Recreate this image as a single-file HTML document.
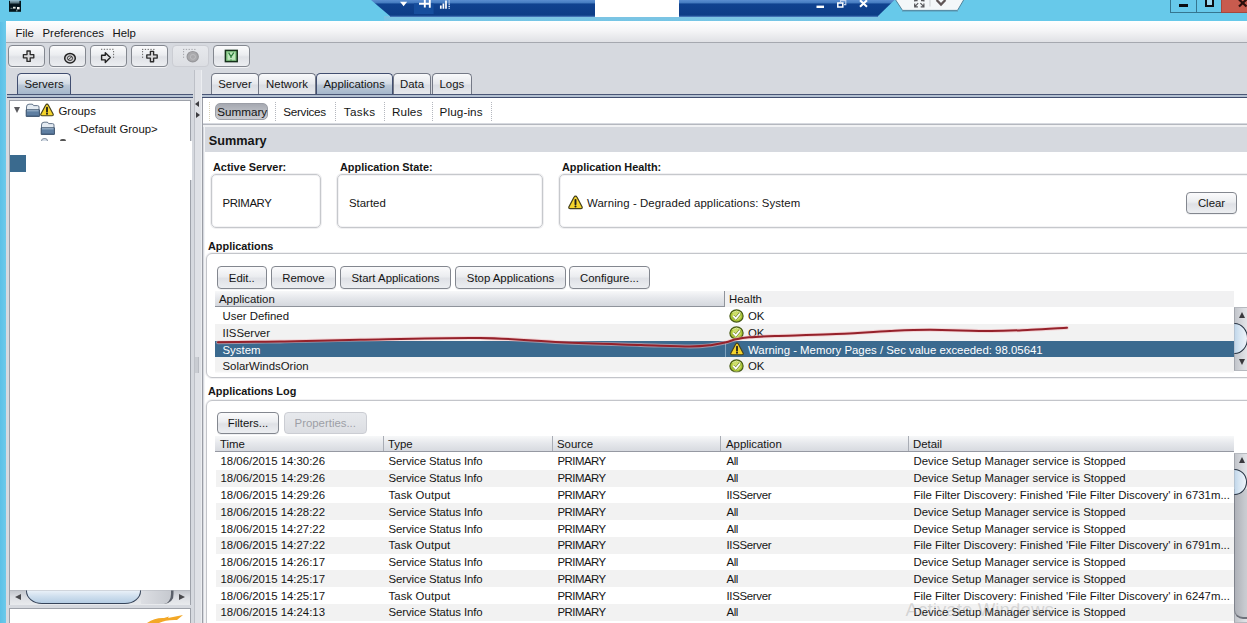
<!DOCTYPE html>
<html><head><meta charset="utf-8"><title>Management Client</title>
<style>
*{box-sizing:border-box;margin:0;padding:0}
html,body{width:1247px;height:623px;overflow:hidden}
body{position:relative;background:#d6d9df;font-family:"Liberation Sans",Arial,sans-serif;font-size:11.4px;color:#151515;}
.a{position:absolute}
.t{position:absolute;white-space:nowrap;line-height:14px;height:14px}
.b{font-weight:bold;font-size:10.9px}
.btn{position:absolute;border:1px solid #83878f;border-radius:4px;background:linear-gradient(#fbfbfc,#ebedf0 45%,#dfe1e6 55%,#eceef1);box-shadow:0 1px 0 #f1f2f4;text-align:center;white-space:nowrap;font-size:11.4px}
.btn.dis{border-color:#cbcdd3;color:#9d9fa6;background:linear-gradient(#e7e9ed,#dcdee3);box-shadow:none}
.tab{position:absolute;top:73px;height:21px;border:1.2px solid #747986;border-bottom:none;border-radius:4.5px 4.5px 0 0;background:linear-gradient(#f9fafb,#e6e8ec 50%,#dadde3 55%,#e6e8ec);text-align:center;line-height:21px;font-size:11.4px;white-space:nowrap}
.tab.sel{border-color:#414e70;border-width:1.4px;height:22px;background:linear-gradient(#f1f3f6,#d3dbe5 45%,#bac7d6 55%,#a3b5ca);}
.hdr{position:absolute;background:linear-gradient(#f7f8f9,#e6e8ec 45%,#d5d8de);border-bottom:1px solid #a6aab2}
.row{position:absolute;height:17px}
.alt{background:#f2f2f2}
.sep{position:absolute;width:1px;background:#a9adb5}
</style></head><body>

<div class="a" style="left:0;top:0;width:1247px;height:22px;background:#67c9ea"></div>
<div class="a" style="left:0;top:22px;width:6px;height:601px;background:linear-gradient(90deg,#5cc0e6,#6ccaeb)"></div>
<svg class="a" style="left:8px;top:0" width="14" height="13" viewBox="8 0 14 13"><defs><linearGradient id="ig" x1="0" y1="0" x2="0" y2="1"><stop offset="0" stop-color="#9cc6d6"/><stop offset="0.6" stop-color="#5f7f88"/><stop offset="1" stop-color="#0c2026"/></linearGradient></defs><rect x="9" y="0.8" width="12" height="11" fill="#03151b"/><rect x="10" y="0" width="9.4" height="4.2" fill="url(#ig)"/><path d="M10.5 8.3 H12.5" stroke="#8fa3a0" stroke-width="0.8"/><rect x="13" y="6.8" width="2.6" height="1.8" fill="#dfe8e0"/><rect x="17" y="7" width="2.6" height="2.4" fill="#f4f8f2"/><rect x="16.2" y="9.6" width="1.2" height="1.8" fill="#7f9a98"/></svg>
<div class="a" style="left:384px;top:16px;width:496px;height:5.5px;background:linear-gradient(#80c3e2,#72c6e7)"></div>
<svg class="a" style="left:360px;top:0" width="560" height="19" viewBox="360 0 560 19"><defs><linearGradient id="cb" x1="0" y1="0" x2="0" y2="1"><stop offset="0" stop-color="#5b8ed0"/><stop offset="0.17" stop-color="#457bc0"/><stop offset="0.24" stop-color="#10428f"/><stop offset="1" stop-color="#0c3b85"/></linearGradient></defs><path d="M371 0 L894.5 0 L877.5 16.6 L390.5 16.6 Z" fill="url(#cb)"/><path d="M390 16.3 L878 16.3" stroke="#3f70b3" stroke-width="1.2"/><rect x="414" y="3.4" width="19.6" height="10.6" fill="#164e9d"/><path d="M400 1.8 L407.2 1.8 L403.6 6.2 Z" fill="#fff"/><path d="M419 3.7 H430 M424.8 0 V7.6 M429.8 0 V7.8" stroke="#fff" stroke-width="1.9" fill="none"/><path d="M440.8 8.8 V5.6 M443.4 8.8 V3.4 M446 8.8 V0.6" stroke="#fff" stroke-width="1.7"/><path d="M449.2 8.8 V0" stroke="#d4e0f2" stroke-width="1.5" stroke-dasharray="1 0.8"/><rect x="816.5" y="5.6" width="7.5" height="2.4" fill="#fff"/><rect x="837.8" y="3" width="5" height="4" fill="none" stroke="#fff" stroke-width="1.5"/><path d="M840.5 2.2 V0.6 H845.8 V4.6 H844" fill="none" stroke="#c3d3ec" stroke-width="1.1"/><path d="M860 0.3 L867 6.8 M867 0.3 L860 6.8" stroke="#fff" stroke-width="2.1"/></svg>
<div class="a" style="left:595px;top:0;width:84px;height:17px;background:#fff"></div>
<svg class="a" style="left:890px;top:0" width="80" height="13" viewBox="890 0 80 13"><path d="M895 -1 L902.5 10.4 L957.5 10.4 L964.2 -1 Z" fill="#f3f7f9" stroke="#4f8199" stroke-width="1"/><path d="M902 11.2 H958" stroke="#5a9ab8" stroke-width="0.8"/><path d="M918.2 3.2 L915 6.4 M914.7 3.6 V6.8 H917.9 M920.4 3.2 L923.6 6.4 M923.9 3.6 V6.8 H920.7 M914.7 1.6 V0 M923.9 1.6 V0 M915 0.6 H917.6 M921 0.6 H923.6" stroke="#56565a" stroke-width="1.2" fill="none"/><path d="M930 0 V6.5" stroke="#b9bcc0" stroke-width="0.7"/><path d="M936.6 0 L941 4.6 L945.4 0" fill="none" stroke="#5f5556" stroke-width="2.3"/></svg>
<div class="a" style="left:1170.3px;top:-1px;width:27px;height:13.6px;border:1.2px solid #35768f;background:#67c9ea"></div>
<div class="a" style="left:1196px;top:-1px;width:26px;height:13.6px;border:1.2px solid #35768f;background:#67c9ea"></div>
<div class="a" style="left:1220.8px;top:-1px;width:28px;height:13.6px;border:1px solid #a5483d;background:#c85b4e"></div>
<div class="a" style="left:1178.8px;top:4.2px;width:9.4px;height:2.9px;background:#0c0c10"></div>
<div class="a" style="left:1205px;top:-2px;width:9px;height:9.2px;border:2px solid #0c0c10;background:#9fd9ef"></div>
<svg class="a" style="left:1236px;top:0" width="11" height="9" viewBox="0 0 11 9"><path d="M3 -0.5 L10.5 6.5 M10.5 -0.5 L3 6.5" stroke="#2a0e0c" stroke-width="2.3"/></svg>
<div class="a" style="left:6px;top:21.4px;width:1241px;height:21.6px;background:linear-gradient(#ffffff,#f5f5f7 45%,#e0e1e5);border-bottom:1px solid #a5a8af"></div>
<div class="t" style="left:15.5px;top:26px">File</div>
<div class="t" style="left:42.5px;top:26px">Preferences</div>
<div class="t" style="left:112.5px;top:26px">Help</div>
<div class="btn" style="left:8.3px;top:45px;width:37px;height:22px"></div>
<div class="btn" style="left:49.3px;top:45px;width:37px;height:22px"></div>
<div class="btn" style="left:90.3px;top:45px;width:37px;height:22px"></div>
<div class="btn" style="left:131.3px;top:45px;width:37px;height:22px"></div>
<div class="btn dis" style="left:172.3px;top:45px;width:37px;height:22px"></div>
<div class="btn" style="left:213.3px;top:45px;width:37px;height:22px"></div>
<svg class="a" style="left:0;top:0" width="260" height="70" viewBox="0 0 260 70"><path d="M27.0 51.0 H30.200000000000003 V54.6 H33.800000000000004 V57.800000000000004 H30.200000000000003 V61.400000000000006 H27.0 V57.800000000000004 H23.400000000000002 V54.6 H27.0 Z" fill="#d9d9db" stroke="#2b2b2b" stroke-width="1.35" stroke-linejoin="round"/><ellipse cx="70" cy="58.2" rx="5.3" ry="4.7" fill="#cfcfd2" stroke="#222" stroke-width="1.5"/><ellipse cx="70" cy="58.2" rx="2.6" ry="2.3" fill="none" stroke="#333" stroke-width="0.9"/><path d="M68 60 L72 56.4" stroke="#333" stroke-width="0.9"/><path d="M101 49.3 H114 M113.6 51 V58.5" stroke="#666" stroke-width="1" stroke-dasharray="1.3 1.5" fill="none"/><path d="M101.6 55.3 H105.3 V52.8 L110.3 57.6 L105.3 62.4 V59.9 H101.6 Z" fill="#e4e4e6" stroke="#222" stroke-width="1.4" stroke-linejoin="round"/><path d="M142 49.4 H156 M142.6 51 V58.5" stroke="#666" stroke-width="1" stroke-dasharray="1.3 1.5" fill="none"/><path d="M150.4 51.3 H153.6 V54.9 H157.2 V58.1 H153.6 V61.7 H150.4 V58.1 H146.8 V54.9 H150.4 Z" fill="#d9d9db" stroke="#2b2b2b" stroke-width="1.35" stroke-linejoin="round"/><path d="M183 49.4 H197 M183.6 51 V58.5" stroke="#a4a5aa" stroke-width="1" stroke-dasharray="1.3 1.5" fill="none"/><ellipse cx="192.7" cy="56.7" rx="5.6" ry="5.2" fill="#a9a9ac" stroke="#97979b" stroke-width="1.2"/><ellipse cx="192.9" cy="56.9" rx="2.6" ry="2.4" fill="none" stroke="#bdbdc0" stroke-width="1"/><rect x="225.4" y="50.4" width="11.8" height="11.2" fill="#86c886" stroke="#15301a" stroke-width="1.5"/><rect x="227.6" y="52.4" width="7.4" height="7.4" fill="#bfe6bd"/><path d="M228.6 52.6 L231 56.6 L233.8 52.6 M231 56.6 V58 M231 59.4 V60.4" stroke="#2a7a3a" stroke-width="1.2" fill="none"/></svg>
<div class="tab sel" style="left:17px;width:54px">Servers</div>
<div class="a" style="left:7px;top:93.6px;width:186px;height:1.5px;background:#4a5676"></div>
<div class="a" style="left:7px;top:95px;width:186px;height:2px;background:#b4c1d2"></div>
<div class="a" style="left:7px;top:96.8px;width:186px;height:1.5px;background:#414d6e"></div>
<div class="a" style="left:8.5px;top:100px;width:182.5px;height:505px;background:#fff;border:1px solid #9da1a9"></div>
<div class="a" style="left:14px;top:106.5px;width:0;height:0;border-left:3.5px solid transparent;border-right:3.5px solid transparent;border-top:6.5px solid #5a5a5e"></div>
<svg class="a" style="left:24.5px;top:103px" width="16" height="15" viewBox="0 0 16 15"><path d="M1.5 4 Q1.5 1.2 4 1.2 H7 Q8.2 1.2 8.6 2.6 H12.5 Q14 2.6 14 4 V13 H1.5 Z" fill="#e4ebf2" stroke="#66778c" stroke-width="1"/><path d="M1.2 6.8 H14.4 V13.4 H1.2 Z" fill="#5f7fa2" stroke="#40566f" stroke-width="1"/><path d="M2 7.8 H13.6" stroke="#a9bed4" stroke-width="1"/><path d="M2 12.6 H13.6" stroke="#4f6c8d" stroke-width="1"/></svg>
<svg class="a" style="left:40.3px;top:103px" width="14" height="14" viewBox="0 0 14 14"><path d="M7 1.1 Q7.9 1.1 8.3 1.9 L13.1 10.9 Q13.7 12.7 12 12.7 H2 Q0.3 12.7 0.9 10.9 L5.7 1.9 Q6.1 1.1 7 1.1 Z" fill="#f5d42b" stroke="#45401c" stroke-width="1.15" stroke-linejoin="round"/><path d="M7 4.6 V8.7" stroke="#1e1e1e" stroke-width="1.8" stroke-linecap="round"/><circle cx="7" cy="10.7" r="1" fill="#1e1e1e"/></svg>
<div class="t" style="left:58.5px;top:104px">Groups</div>
<svg class="a" style="left:39.7px;top:121px" width="16" height="15" viewBox="0 0 16 15"><path d="M1.5 4 Q1.5 1.2 4 1.2 H7 Q8.2 1.2 8.6 2.6 H12.5 Q14 2.6 14 4 V13 H1.5 Z" fill="#e4ebf2" stroke="#66778c" stroke-width="1"/><path d="M1.2 6.8 H14.4 V13.4 H1.2 Z" fill="#5f7fa2" stroke="#40566f" stroke-width="1"/><path d="M2 7.8 H13.6" stroke="#a9bed4" stroke-width="1"/><path d="M2 12.6 H13.6" stroke="#4f6c8d" stroke-width="1"/></svg>
<div class="t" style="left:73.5px;top:122px">&lt;Default Group&gt;</div>
<div class="a" style="left:41px;top:138.2px;width:7px;height:4px;background:#d8dfe8;border:1px solid #8a96a6;border-radius:4px 4px 0 0"></div>
<div class="a" style="left:60px;top:139px;width:6px;height:3px;background:#555;border-radius:2px 2px 0 0"></div>
<div class="a" style="left:24px;top:140.7px;width:168px;height:39.5px;background:#fff"></div>
<div class="a" style="left:10px;top:154.5px;width:16px;height:17px;background:#3a6a8e"></div>
<div class="a" style="left:9.5px;top:590px;width:180.5px;height:14.5px;background:linear-gradient(#c4c7cd,#dcdee3 45%,#e8eaed);border-top:1px solid #b5b8bf"></div>
<div class="a" style="left:26px;top:580px;width:114.5px;height:24px;border:1.6px solid #36445a;border-radius:0 0 16px 16px / 0 0 13px 13px;background:linear-gradient(#eef4fa 40%,#cfdfee 70%,#b5cde4);clip-path:inset(10.5px -2px -2px -2px)"></div>
<div class="a" style="left:141px;top:580px;width:32.5px;height:24px;border-right:3px solid #5b606a;border-radius:0 0 10px 0;background:linear-gradient(90deg,#dcdee3,#c6c9cf);clip-path:inset(10.5px 0 0 0)"></div>
<div class="a" style="left:14.5px;top:593.8px;width:0;height:0;border-top:3.4px solid transparent;border-bottom:3.4px solid transparent;border-right:6.5px solid #4a4a4e"></div>
<div class="a" style="left:178.6px;top:593.8px;width:0;height:0;border-top:3.4px solid transparent;border-bottom:3.4px solid transparent;border-left:6.5px solid #4a4a4e"></div>
<div class="a" style="left:8.5px;top:608px;width:182.5px;height:20px;background:#fff;border:1px solid #9da1a9"></div>
<svg class="a" style="left:146px;top:613px" width="40" height="10" viewBox="0 0 40 10"><path d="M1 10 Q9 4.5 18 5 L23 3.5 L22 5 L37 2 L31 7 Q20 6.5 13 10 Z" fill="#f3a827"/></svg>
<div class="a" style="left:193.5px;top:69.5px;width:8px;height:554px;background:#dfe1e6;border-left:1.2px solid #bdc0c7;border-right:1px solid #eceef1"></div>
<div class="a" style="left:195.3px;top:100.8px;width:0;height:0;border-top:3px solid transparent;border-bottom:3px solid transparent;border-right:4px solid #3c3c40"></div>
<div class="a" style="left:195.6px;top:112px;width:0;height:0;border-top:3px solid transparent;border-bottom:3px solid transparent;border-left:4px solid #3c3c40"></div>
<div class="tab" style="left:211.3px;width:47.4px">Server</div>
<div class="tab" style="left:258.2px;width:57.6px">Network</div>
<div class="tab sel" style="left:315.7px;width:77px">Applications</div>
<div class="tab" style="left:392.7px;width:38.8px">Data</div>
<div class="tab" style="left:431.7px;width:40.3px">Logs</div>
<div class="a" style="left:202px;top:93.6px;width:1045px;height:1.5px;background:#4a5676"></div>
<div class="a" style="left:202px;top:95px;width:1045px;height:2px;background:#b4c1d2"></div>
<div class="a" style="left:202px;top:96.8px;width:1045px;height:1.5px;background:#414d6e"></div>
<div class="a" style="left:202px;top:98.3px;width:1045px;height:25.2px;background:#fff"></div>
<div class="a" style="left:202px;top:123.5px;width:1045px;height:1.5px;background:#b4b7be"></div>
<div class="a" style="left:202px;top:124.6px;width:1045px;height:2.2px;background:#f1f2f4"></div>
<div class="a" style="left:214.5px;top:102.5px;width:53px;height:17px;border-radius:5px;background:linear-gradient(#a6a9b1,#bfc2c8 60%,#c8cad0);border:1px solid #9b9ea6"></div>
<div class="t" style="left:217.2px;top:105px;font-size:11.7px;letter-spacing:0px">Summary</div>
<div class="t" style="left:283.2px;top:105px;font-size:11.7px;letter-spacing:-0.26px">Services</div>
<div class="t" style="left:343.8px;top:105px;font-size:11.7px;letter-spacing:0.36px">Tasks</div>
<div class="t" style="left:392px;top:105px;font-size:11.7px;letter-spacing:0.1px">Rules</div>
<div class="t" style="left:439.6px;top:105px;font-size:11.7px;letter-spacing:0.1px">Plug-ins</div>
<div class="a" style="left:209px;top:101.5px;width:0;height:19px;border-left:1px dotted #d8d2b8"></div>
<div class="a" style="left:275px;top:101.5px;width:0;height:19px;border-left:1px dotted #b4b7be"></div>
<div class="a" style="left:335.2px;top:101.5px;width:0;height:19px;border-left:1px dotted #b4b7be"></div>
<div class="a" style="left:384.3px;top:101.5px;width:0;height:19px;border-left:1px dotted #b4b7be"></div>
<div class="a" style="left:431.5px;top:101.5px;width:0;height:19px;border-left:1px dotted #b4b7be"></div>
<div class="a" style="left:491px;top:101.5px;width:0;height:19px;border-left:1px dotted #b4b7be"></div>
<div class="a" style="left:204.2px;top:126.6px;width:1043px;height:25.2px;background:#d6d9df"></div>
<div class="t" style="left:208.8px;top:133.7px;font-weight:bold;font-size:12.7px">Summary</div>
<div class="a" style="left:204px;top:151.8px;width:1043px;height:472px;background:#fff"></div>
<div class="a" style="left:201.8px;top:98.3px;width:1.3px;height:525px;background:#9a9da5"></div>
<div class="a" style="left:203.6px;top:126px;width:1px;height:500px;background:#f2f3f5"></div>
<div class="t b" style="left:213px;top:160px">Active Server:</div>
<div class="t b" style="left:340px;top:160px">Application State:</div>
<div class="t b" style="left:562px;top:160px">Application Health:</div>
<div class="a" style="left:210.6px;top:174px;width:110px;height:54px;border:1px solid #c6c8cc;border-radius:5px;box-shadow:0 0 0 1px #f0f0f2, inset 0 0 0 1px #f3f3f5;"></div>
<div class="a" style="left:337px;top:174px;width:206px;height:54px;border:1px solid #c6c8cc;border-radius:5px;box-shadow:0 0 0 1px #f0f0f2, inset 0 0 0 1px #f3f3f5;"></div>
<div class="a" style="left:559px;top:174px;width:700px;height:54px;border:1px solid #c6c8cc;border-radius:5px;box-shadow:0 0 0 1px #f0f0f2, inset 0 0 0 1px #f3f3f5;"></div>
<div class="t" style="left:222.5px;top:196px;letter-spacing:-0.4px">PRIMARY</div>
<div class="t" style="left:349px;top:196px">Started</div>
<svg class="a" style="left:568.3px;top:195.3px" width="15" height="15" viewBox="0 0 14 14"><path d="M7 1.1 Q7.9 1.1 8.3 1.9 L13.1 10.9 Q13.7 12.7 12 12.7 H2 Q0.3 12.7 0.9 10.9 L5.7 1.9 Q6.1 1.1 7 1.1 Z" fill="#f5d42b" stroke="#45401c" stroke-width="1.15" stroke-linejoin="round"/><path d="M7 4.6 V8.7" stroke="#1e1e1e" stroke-width="1.8" stroke-linecap="round"/><circle cx="7" cy="10.7" r="1" fill="#1e1e1e"/></svg>
<div class="t" style="left:587px;top:196px;letter-spacing:0.09px">Warning - Degraded applications: System</div>
<div class="btn" style="left:1186px;top:192px;width:51px;height:22px;line-height:20px">Clear</div>
<div class="t b" style="left:208px;top:239px">Applications</div>
<div class="a" style="left:206px;top:253px;width:1060px;height:125px;border:1px solid #c3c5ca;border-radius:6px;box-shadow:0 0 0 1px #f1f1f3"></div>
<div class="btn" style="left:217px;top:266px;width:49.6px;height:23px;line-height:22.2px">Edit..</div>
<div class="btn" style="left:271.3px;top:266px;width:64.3px;height:23px;line-height:22.2px">Remove</div>
<div class="btn" style="left:340px;top:266px;width:111px;height:23px;line-height:22.2px">Start Applications</div>
<div class="btn" style="left:455px;top:266px;width:111px;height:23px;line-height:22.2px">Stop Applications</div>
<div class="btn" style="left:569px;top:266px;width:81px;height:23px;line-height:22.2px">Configure...</div>
<div class="hdr" style="left:215.3px;top:290.5px;width:509.5px;height:16.3px;border-bottom:1px solid #8f939b"></div>
<div class="a" style="left:725px;top:290.5px;width:509.4px;height:16.5px;background:#f1f1f2"></div>
<div class="sep" style="left:724px;top:290.5px;height:16.3px;background:#8f939b"></div>
<div class="t" style="left:219px;top:292px">Application</div>
<div class="t" style="left:729px;top:292px">Health</div>
<div class="a" style="left:215.3px;top:307.2px;width:1019.1px;height:17.2px;background:#fff"></div>
<div class="t" style="left:222.5px;top:309.0px;color:#151515">User Defined</div>
<svg class="a" style="left:729.4px;top:309.0px" width="15" height="14" viewBox="0 0 15 14"><ellipse cx="7.5" cy="7" rx="6.6" ry="6.1" fill="#a9c533" stroke="#485a16" stroke-width="1.2"/><ellipse cx="7.5" cy="7" rx="4.4" ry="4" fill="#cfdf6c"/><path d="M3.4 3.6 Q7.5 0.6 11.6 3.6" stroke="#e4eeb0" stroke-width="0.9" fill="none"/><path d="M4.2 6.9 L6.8 9.6 L11 4.5" fill="none" stroke="#6a7d22" stroke-width="2.9" stroke-linejoin="round"/><path d="M4.2 6.9 L6.8 9.6 L11 4.5" fill="none" stroke="#ffffff" stroke-width="1.8"/></svg>
<div class="t" style="left:748px;top:309.0px">OK</div>
<div class="a" style="left:215.3px;top:323.9px;width:1019.1px;height:17.2px;background:#f2f2f2"></div>
<div class="t" style="left:222.5px;top:325.7px;color:#151515">IISServer</div>
<svg class="a" style="left:729.4px;top:325.7px" width="15" height="14" viewBox="0 0 15 14"><ellipse cx="7.5" cy="7" rx="6.6" ry="6.1" fill="#a9c533" stroke="#485a16" stroke-width="1.2"/><ellipse cx="7.5" cy="7" rx="4.4" ry="4" fill="#cfdf6c"/><path d="M3.4 3.6 Q7.5 0.6 11.6 3.6" stroke="#e4eeb0" stroke-width="0.9" fill="none"/><path d="M4.2 6.9 L6.8 9.6 L11 4.5" fill="none" stroke="#6a7d22" stroke-width="2.9" stroke-linejoin="round"/><path d="M4.2 6.9 L6.8 9.6 L11 4.5" fill="none" stroke="#ffffff" stroke-width="1.8"/></svg>
<div class="t" style="left:748px;top:325.7px">OK</div>
<div class="a" style="left:215.3px;top:341.1px;width:1019.1px;height:15.9px;background:#3b6a8f"></div>
<div class="t" style="left:222.5px;top:342.9px;color:#fff">System</div>
<div class="a" style="left:725px;top:341.1px;width:1px;height:16px;background:#7fa3bf"></div>
<svg class="a" style="left:730px;top:342.1px" width="14" height="14" viewBox="0 0 14 14"><path d="M7 1.1 Q7.9 1.1 8.3 1.9 L13.1 10.9 Q13.7 12.7 12 12.7 H2 Q0.3 12.7 0.9 10.9 L5.7 1.9 Q6.1 1.1 7 1.1 Z" fill="#f5d42b" stroke="#45401c" stroke-width="1.15" stroke-linejoin="round"/><path d="M7 4.6 V8.7" stroke="#1e1e1e" stroke-width="1.8" stroke-linecap="round"/><circle cx="7" cy="10.7" r="1" fill="#1e1e1e"/></svg>
<div class="t" style="left:748px;top:342.9px;color:#fff">Warning - Memory Pages / Sec value exceeded: 98.05641</div>
<div class="a" style="left:215.3px;top:357.3px;width:1019.1px;height:17.2px;background:#f2f2f2"></div>
<div class="t" style="left:222.5px;top:359.1px;color:#151515">SolarWindsOrion</div>
<svg class="a" style="left:729.4px;top:359.1px" width="15" height="14" viewBox="0 0 15 14"><ellipse cx="7.5" cy="7" rx="6.6" ry="6.1" fill="#a9c533" stroke="#485a16" stroke-width="1.2"/><ellipse cx="7.5" cy="7" rx="4.4" ry="4" fill="#cfdf6c"/><path d="M3.4 3.6 Q7.5 0.6 11.6 3.6" stroke="#e4eeb0" stroke-width="0.9" fill="none"/><path d="M4.2 6.9 L6.8 9.6 L11 4.5" fill="none" stroke="#6a7d22" stroke-width="2.9" stroke-linejoin="round"/><path d="M4.2 6.9 L6.8 9.6 L11 4.5" fill="none" stroke="#ffffff" stroke-width="1.8"/></svg>
<div class="t" style="left:748px;top:359.1px">OK</div>
<div class="a" style="left:215px;top:371px;width:1019.4px;height:5px;background:linear-gradient(rgba(255,255,255,0),#fff 50%)"></div>
<div class="a" style="left:1234.4px;top:307px;width:14px;height:63.5px;background:linear-gradient(90deg,#c2c5cb,#dcdee2 70%,#e4e6e9);border-left:1px solid #a4a7ae;border-top:1px solid #b6b9bf;border-bottom:1px solid #b6b9bf"></div>
<div class="a" style="left:1238.5px;top:311.8px;width:0;height:0;border-left:3.3px solid transparent;border-right:3.3px solid transparent;border-bottom:6.6px solid #3a3a3e"></div>
<div class="a" style="left:1238.5px;top:359.0px;width:0;height:0;border-left:3.3px solid transparent;border-right:3.3px solid transparent;border-top:6.6px solid #3a3a3e"></div>
<div class="a" style="left:1220.9px;top:323.4px;width:27.0px;height:31.0px;border:1.7px solid #263242;border-radius:50%;background:linear-gradient(90deg,#c0d6ea 50%,#d6e5f2 70%,#eef4fa);clip-path:inset(-1px -1px -1px 13.5px)"></div>
<div class="a" style="left:195px;top:357px;width:4px;height:16px;background:#c9ccd2;border-right:1px solid #b9bcc3"></div>
<div class="t b" style="left:208px;top:384px">Applications Log</div>
<div class="a" style="left:206px;top:399.5px;width:1060px;height:240px;border:1px solid #c3c5ca;border-radius:6px;box-shadow:0 0 0 1px #f1f1f3"></div>
<div class="btn" style="left:217px;top:411.5px;width:62px;height:22.6px;line-height:20.4px">Filters...</div>
<div class="btn dis" style="left:283.5px;top:411.5px;width:83.5px;height:22.6px;line-height:20.4px">Properties...</div>
<div class="hdr" style="left:215.3px;top:436px;width:1019px;height:15.6px;border-bottom:none"></div>
<div class="t" style="left:220px;top:437px">Time</div>
<div class="t" style="left:388px;top:437px">Type</div>
<div class="t" style="left:557px;top:437px">Source</div>
<div class="t" style="left:726px;top:437px">Application</div>
<div class="t" style="left:913px;top:437px">Detail</div>
<div class="sep" style="left:383px;top:436px;height:15px"></div>
<div class="sep" style="left:552px;top:436px;height:15px"></div>
<div class="sep" style="left:720px;top:436px;height:15px"></div>
<div class="sep" style="left:908px;top:436px;height:15px"></div>
<div class="a" style="left:215.3px;top:451.4px;width:1019px;height:1px;background:#9699a2"></div>
<div class="t" style="left:220.5px;top:454.40px">18/06/2015 14:30:26</div>
<div class="t" style="left:388.5px;top:454.40px;letter-spacing:-0.08px">Service Status Info</div>
<div class="t" style="left:557.5px;top:454.40px;letter-spacing:-0.5px">PRIMARY</div>
<div class="t" style="left:726.5px;top:454.40px;letter-spacing:-0.45px">All</div>
<div class="t" style="left:913.5px;top:454.40px">Device Setup Manager service is Stopped</div>
<div class="a" style="left:216px;top:469.78px;width:1018px;height:16.78px;background:#f2f2f2"></div>
<div class="t" style="left:220.5px;top:471.18px">18/06/2015 14:29:26</div>
<div class="t" style="left:388.5px;top:471.18px;letter-spacing:-0.08px">Service Status Info</div>
<div class="t" style="left:557.5px;top:471.18px;letter-spacing:-0.5px">PRIMARY</div>
<div class="t" style="left:726.5px;top:471.18px;letter-spacing:-0.45px">All</div>
<div class="t" style="left:913.5px;top:471.18px">Device Setup Manager service is Stopped</div>
<div class="t" style="left:220.5px;top:487.96px">18/06/2015 14:29:26</div>
<div class="t" style="left:388.5px;top:487.96px;letter-spacing:0.1px">Task Output</div>
<div class="t" style="left:557.5px;top:487.96px;letter-spacing:-0.5px">PRIMARY</div>
<div class="t" style="left:726.5px;top:487.96px;letter-spacing:-0.3px">IISServer</div>
<div class="t" style="left:913.5px;top:487.96px">File Filter Discovery: Finished 'File Filter Discovery' in 6731m...</div>
<div class="a" style="left:216px;top:503.34px;width:1018px;height:16.78px;background:#f2f2f2"></div>
<div class="t" style="left:220.5px;top:504.74px">18/06/2015 14:28:22</div>
<div class="t" style="left:388.5px;top:504.74px;letter-spacing:-0.08px">Service Status Info</div>
<div class="t" style="left:557.5px;top:504.74px;letter-spacing:-0.5px">PRIMARY</div>
<div class="t" style="left:726.5px;top:504.74px;letter-spacing:-0.45px">All</div>
<div class="t" style="left:913.5px;top:504.74px">Device Setup Manager service is Stopped</div>
<div class="t" style="left:220.5px;top:521.52px">18/06/2015 14:27:22</div>
<div class="t" style="left:388.5px;top:521.52px;letter-spacing:-0.08px">Service Status Info</div>
<div class="t" style="left:557.5px;top:521.52px;letter-spacing:-0.5px">PRIMARY</div>
<div class="t" style="left:726.5px;top:521.52px;letter-spacing:-0.45px">All</div>
<div class="t" style="left:913.5px;top:521.52px">Device Setup Manager service is Stopped</div>
<div class="a" style="left:216px;top:536.90px;width:1018px;height:16.78px;background:#f2f2f2"></div>
<div class="t" style="left:220.5px;top:538.30px">18/06/2015 14:27:22</div>
<div class="t" style="left:388.5px;top:538.30px;letter-spacing:0.1px">Task Output</div>
<div class="t" style="left:557.5px;top:538.30px;letter-spacing:-0.5px">PRIMARY</div>
<div class="t" style="left:726.5px;top:538.30px;letter-spacing:-0.3px">IISServer</div>
<div class="t" style="left:913.5px;top:538.30px">File Filter Discovery: Finished 'File Filter Discovery' in 6791m...</div>
<div class="t" style="left:220.5px;top:555.08px">18/06/2015 14:26:17</div>
<div class="t" style="left:388.5px;top:555.08px;letter-spacing:-0.08px">Service Status Info</div>
<div class="t" style="left:557.5px;top:555.08px;letter-spacing:-0.5px">PRIMARY</div>
<div class="t" style="left:726.5px;top:555.08px;letter-spacing:-0.45px">All</div>
<div class="t" style="left:913.5px;top:555.08px">Device Setup Manager service is Stopped</div>
<div class="a" style="left:216px;top:570.46px;width:1018px;height:16.78px;background:#f2f2f2"></div>
<div class="t" style="left:220.5px;top:571.86px">18/06/2015 14:25:17</div>
<div class="t" style="left:388.5px;top:571.86px;letter-spacing:-0.08px">Service Status Info</div>
<div class="t" style="left:557.5px;top:571.86px;letter-spacing:-0.5px">PRIMARY</div>
<div class="t" style="left:726.5px;top:571.86px;letter-spacing:-0.45px">All</div>
<div class="t" style="left:913.5px;top:571.86px">Device Setup Manager service is Stopped</div>
<div class="t" style="left:220.5px;top:588.64px">18/06/2015 14:25:17</div>
<div class="t" style="left:388.5px;top:588.64px;letter-spacing:0.1px">Task Output</div>
<div class="t" style="left:557.5px;top:588.64px;letter-spacing:-0.5px">PRIMARY</div>
<div class="t" style="left:726.5px;top:588.64px;letter-spacing:-0.3px">IISServer</div>
<div class="t" style="left:913.5px;top:588.64px">File Filter Discovery: Finished 'File Filter Discovery' in 6247m...</div>
<div class="a" style="left:216px;top:604.02px;width:1018px;height:16.78px;background:#f2f2f2"></div>
<div class="t" style="left:220.5px;top:605.42px">18/06/2015 14:24:13</div>
<div class="t" style="left:388.5px;top:605.42px;letter-spacing:-0.08px">Service Status Info</div>
<div class="t" style="left:557.5px;top:605.42px;letter-spacing:-0.5px">PRIMARY</div>
<div class="t" style="left:726.5px;top:605.42px;letter-spacing:-0.45px">All</div>
<div class="t" style="left:913.5px;top:605.42px">Device Setup Manager service is Stopped</div>
<div class="a" style="left:1234.4px;top:452.5px;width:14px;height:170.5px;background:linear-gradient(90deg,#c2c5cb,#dcdee2 70%,#e4e6e9);border-left:1px solid #a4a7ae;border-top:1px solid #b6b9bf;border-bottom:1px solid #b6b9bf"></div>
<div class="a" style="left:1234.4px;top:489.2px;width:20px;height:129.59999999999997px;background:linear-gradient(90deg,#aeb1b8,#c6c9ce 50%,#d6d8dc);border-left:1.6px solid #7f838c;border-bottom:2px solid #6e727b;border-radius:0 0 0 9px"></div>
<div class="a" style="left:1238.5px;top:457.3px;width:0;height:0;border-left:3.3px solid transparent;border-right:3.3px solid transparent;border-bottom:6.6px solid #3a3a3e"></div>
<div class="a" style="left:1221.6000000000001px;top:468.5px;width:25.6px;height:26.69999999999999px;border:1.7px solid #263242;border-radius:50%;background:linear-gradient(90deg,#c0d6ea 50%,#d6e5f2 70%,#eef4fa);clip-path:inset(-1px -1px -1px 12.8px)"></div>
<div class="t" style="left:905.5px;top:599px;font-size:18.6px;line-height:22px;height:22px;color:rgba(110,110,110,0.24);letter-spacing:0.1px">Activate Windows</div>
<svg class="a" style="left:0;top:0" width="1247" height="623" viewBox="0 0 1247 623"><path d="M218 342.3 C228.3 342.2 256.3 341.9 280 341.5 C303.7 341.1 326.7 340.3 360 339.7 C393.3 339.1 446.5 337.6 480 338 C513.5 338.4 534.2 341.1 561 342.3 C587.8 343.5 619.5 344.3 641 345 C662.5 345.7 678.2 346.5 690 346.5 C701.8 346.5 706.0 345.7 712 345 C718.0 344.3 722.0 343.2 726 342.3 C730.0 341.4 732.2 340.1 736 339.3 C739.8 338.5 742.5 337.9 749 337.3 C755.5 336.8 761.5 336.5 775 336 C788.5 335.5 810.8 335.1 830 334.3 C849.2 333.5 873.3 331.8 890 331 C906.7 330.2 913.2 329.8 930 329.8 C946.8 329.8 974.2 331.0 991 331 C1007.8 331.0 1018.3 330.3 1031 329.8 C1043.7 329.3 1061.0 328.1 1067 327.8" fill="none" stroke="#f3b9be" stroke-opacity="0.55" stroke-width="3.8" stroke-linecap="round"/><path d="M218 342.3 C228.3 342.2 256.3 341.9 280 341.5 C303.7 341.1 326.7 340.3 360 339.7 C393.3 339.1 446.5 337.6 480 338 C513.5 338.4 534.2 341.1 561 342.3 C587.8 343.5 619.5 344.3 641 345 C662.5 345.7 678.2 346.5 690 346.5 C701.8 346.5 706.0 345.7 712 345 C718.0 344.3 722.0 343.2 726 342.3 C730.0 341.4 732.2 340.1 736 339.3 C739.8 338.5 742.5 337.9 749 337.3 C755.5 336.8 761.5 336.5 775 336 C788.5 335.5 810.8 335.1 830 334.3 C849.2 333.5 873.3 331.8 890 331 C906.7 330.2 913.2 329.8 930 329.8 C946.8 329.8 974.2 331.0 991 331 C1007.8 331.0 1018.3 330.3 1031 329.8 C1043.7 329.3 1061.0 328.1 1067 327.8" fill="none" stroke="#95212a" stroke-width="2" stroke-linecap="round"/></svg>
</body></html>
